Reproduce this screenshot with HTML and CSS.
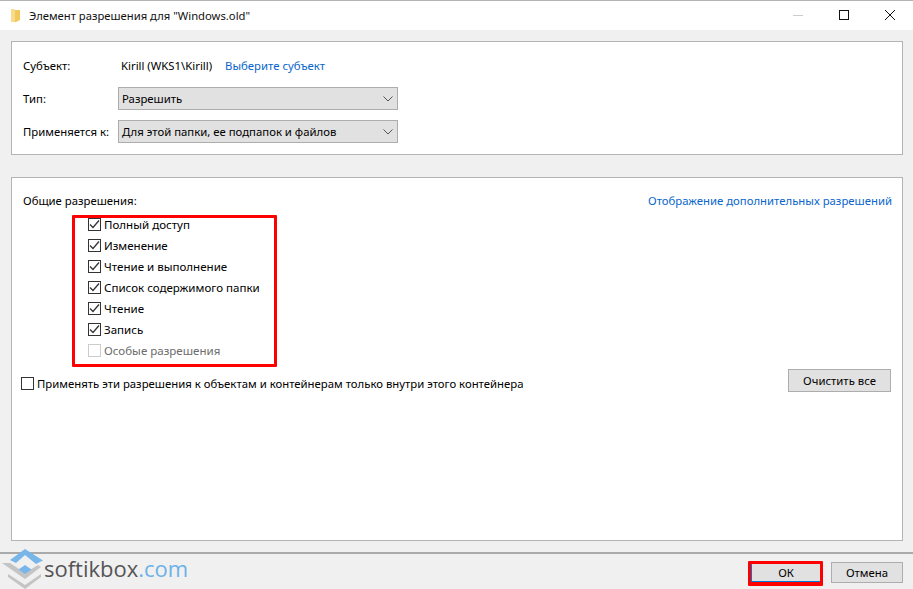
FILE: index.html
```html
<!DOCTYPE html>
<html lang="ru">
<head>
<meta charset="utf-8">
<title>Элемент разрешения</title>
<link rel="stylesheet" href="styles.css">
</head>
<body>
<div class="window">
  <header class="titlebar">
    <svg class="folder" width="9" height="14" viewBox="0 0 9 14"><path d="M0 0h3l1 1v12H0z" fill="#f8dc8c"/><path d="M4 1h5v10l-5 2.500z" fill="#f1c85c"/></svg>
    <span class="title">Элемент разрешения для "Windows.old"</span>
    <div class="controls">
      <svg class="ctl" width="46" height="30" viewBox="0 0 46 30"><path d="M18 14.500h10" stroke="#ccc"/></svg>
      <svg class="ctl" width="46" height="30" viewBox="0 0 46 30"><rect x="18.500" y="9.500" width="9" height="9" fill="none" stroke="#111"/></svg>
      <svg class="ctl" width="46" height="30" viewBox="0 0 46 30"><path d="M18 9l10 10M28 9l-10 10" stroke="#111"/></svg>
    </div>
  </header>
  <main class="content">
    <section class="panel top-panel">
      <div class="row subject-row">
        <span class="label">Субъект:</span>
        <span class="subject">Kirill (WKS1\Kirill)</span>
        <a class="link">Выберите субъект</a>
      </div>
      <div class="row">
        <span class="label">Тип:</span>
        <div class="select"><span>Разрешить</span><svg width="10" height="6" viewBox="0 0 10 6"><path d="M.5.5L5 5 9.500.5" fill="none" stroke="#555"/></svg></div>
      </div>
      <div class="row">
        <span class="label">Применяется к:</span>
        <div class="select"><span>Для этой папки, ее подпапок и файлов</span><svg width="10" height="6" viewBox="0 0 10 6"><path d="M.5.5L5 5 9.500.5" fill="none" stroke="#555"/></svg></div>
      </div>
    </section>
    <section class="panel perm-panel">
      <div class="perm-head">
        <span>Общие разрешения:</span>
        <a class="link perm-link">Отображение дополнительных разрешений</a>
      </div>
      <ul class="perms">
        <li><span class="box checked"><svg width="11" height="11" viewBox="0 0 11 11"><path d="M1 5.500l3 3 6-7" fill="none" stroke="#333" stroke-width="1.300"/></svg></span>Полный доступ</li>
        <li><span class="box checked"><svg width="11" height="11" viewBox="0 0 11 11"><path d="M1 5.500l3 3 6-7" fill="none" stroke="#333" stroke-width="1.300"/></svg></span>Изменение</li>
        <li><span class="box checked"><svg width="11" height="11" viewBox="0 0 11 11"><path d="M1 5.500l3 3 6-7" fill="none" stroke="#333" stroke-width="1.300"/></svg></span>Чтение и выполнение</li>
        <li><span class="box checked"><svg width="11" height="11" viewBox="0 0 11 11"><path d="M1 5.500l3 3 6-7" fill="none" stroke="#333" stroke-width="1.300"/></svg></span>Список содержимого папки</li>
        <li><span class="box checked"><svg width="11" height="11" viewBox="0 0 11 11"><path d="M1 5.500l3 3 6-7" fill="none" stroke="#333" stroke-width="1.300"/></svg></span>Чтение</li>
        <li><span class="box checked"><svg width="11" height="11" viewBox="0 0 11 11"><path d="M1 5.500l3 3 6-7" fill="none" stroke="#333" stroke-width="1.300"/></svg></span>Запись</li>
        <li class="disabled"><span class="box"></span>Особые разрешения</li>
      </ul>
      <div class="apply-row">
        <label class="apply"><span class="box"></span>Применять эти разрешения к объектам и контейнерам только внутри этого контейнера</label>
        <button class="btn clear">Очистить все</button>
      </div>
    </section>
  </main>
  <footer class="footer">
    <button class="btn ok">ОК</button>
    <button class="btn cancel">Отмена</button>
  </footer>
  <div class="redbox perms-mark"></div>
  <div class="redbox ok-mark"></div>
  <div class="logo">
    <svg width="46" height="44" viewBox="0 0 46 44">
      <path d="M2 17h8l15 10 13-8 3 2-16 12z" fill="#c4c4c4"/>
      <path d="M8 28l17 11 16-11v3L25 43 8 31z" fill="#c4c4c4"/>
      <path d="M25 3l18 11.500-7 3.500-11-9-9 8-6-3z" fill="#78b6ea"/>
      <path d="M25 19l6.500 4.500L25 28l-6.500-4.500z" fill="#78b6ea"/>
    </svg>
    <span class="logo-text">softikbox<span class="logo-com">.com</span></span>
  </div>
</div>
</body>
</html>
```
FILE: styles.css
```css
* { box-sizing: border-box; }
html, body { margin: 0; padding: 0; }
body {
  width: 913px;
  height: 589px;
  overflow: hidden;
  font-family: "Noto Sans", "Open Sans", sans-serif;
  font-size: 11.35px;
  color: #000;
}
.window {
  position: relative;
  width: 913px;
  height: 589px;
  background: #f0f0f0;
  display: flex;
  flex-direction: column;
  border-top: 1px solid #b4b4b4;
}
.titlebar {
  height: 29px;
  background: #fff;
  display: flex;
  align-items: center;
  padding-left: 11px;
}
.folder { margin-right: 9px; }
.title { flex: 1; color: #111; font-size: 11.25px; }
.controls { display: flex; height: 30px; }
.ctl { display: block; }
.content {
  flex: 1;
  padding: 11px 10px 0 11px;
  display: flex;
  flex-direction: column;
  gap: 22px;
}
.panel {
  background: #fff;
  border: 1px solid #b4b4b4;
}
.top-panel {
  height: 114px;
  padding: 8px 5px 0 11px;
  display: flex;
  flex-direction: column;
}
.row {
  display: flex;
  align-items: center;
  height: 23px;
  margin-bottom: 10px;
}
.subject-row { height: 17px; margin: 7px 0 13px; }
.label { width: 95px; flex: none; }
.subject { margin-left: 3px; margin-right: 13px; }
.link { color: #0a66cc; }
.perm-link { margin-right: -1px; }
.select {
  width: 280px;
  height: 23px;
  background: #e1e1e1;
  border: 1px solid #adadad;
  display: flex;
  align-items: center;
  justify-content: space-between;
  padding: 0 4px 0 3px;
}
.perm-panel {
  height: 364px;
  padding: 15px 11px 0 11px;
}
.perm-head {
  display: flex;
  justify-content: space-between;
  height: 17px;
  margin-bottom: 4px;
}
.perms {
  list-style: none;
  margin: 0;
  padding: 0 0 0 65px;
  font-size: 11.55px;
}
.perms li {
  height: 21px;
  display: flex;
  align-items: center;
}
.box {
  width: 13px;
  height: 13px;
  border: 1px solid #333;
  background: #fff;
  margin-right: 3px;
  flex: none;
  display: flex;
  align-items: center;
  justify-content: center;
}
.disabled { color: #6d6d6d; }
.disabled .box { border-color: #ccc; }
.apply-row {
  display: flex;
  justify-content: space-between;
  align-items: flex-start;
  margin-top: 8px;
}
.apply {
  display: flex;
  align-items: center;
  margin-left: -2px;
  margin-top: 7px;
}
.btn {
  width: 72px;
  height: 21px;
  background: #e1e1e1;
  border: 1px solid #adadad;
  font: inherit;
  color: #000;
  padding: 0;
}
.clear { width: 103px; height: 23px; }
.ok {
  width: 70px;
  height: 19px;
  margin-top: 1px;
  border-color: #0078d7;
}
.footer {
  height: 37px;
  border-top: 2px solid #aaa;
  margin-top: 11px;
  display: flex;
  justify-content: flex-end;
  align-items: flex-start;
  gap: 10px;
  padding: 8px 10px 0 0;
}
.redbox {
  position: absolute;
  border: 3px solid #f00;
  border-radius: 1px;
}
.perms-mark { left: 72px; top: 214px; width: 205px; height: 152px; }
.ok-mark { left: 748px; top: 560px; width: 75px; height: 25px; border-bottom-width: 4px; }
.logo {
  position: absolute;
  left: 0;
  top: 545px;
  display: flex;
  align-items: flex-start;
}
.logo-text {
  font-family: "Open Sans", sans-serif;
  font-size: 22px;
  font-weight: 500;
  line-height: 30px;
  color: #555;
  margin-left: -2px;
  margin-top: 7px;
}
.logo-com { color: #6cb2e8; }
```
